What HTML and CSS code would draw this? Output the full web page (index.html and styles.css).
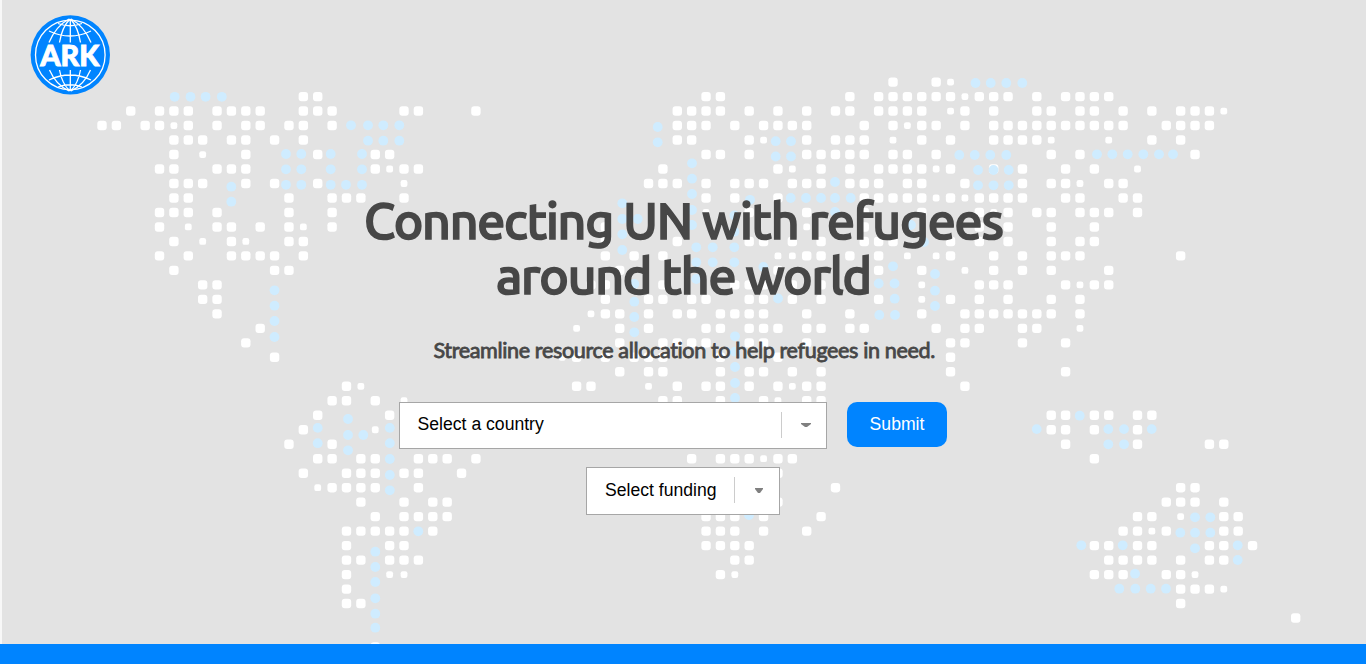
FILE: index.html
```html
<!DOCTYPE html>
<html lang="en">
<head>
<meta charset="utf-8">
<title>ARK</title>
<link rel="stylesheet" href="styles.css">
</head>
<body>
<main class="hero">
  <svg class="map" viewBox="0 0 1366 644" aria-hidden="true"><g id="land"></g><g id="marks"></g></svg>
  <header class="header">
    <svg class="logo" viewBox="0 0 80 81">
      <circle class="disc" cx="40.300" cy="40.900" r="39.700"/>
      <g class="lines">
        <circle cx="40.300" cy="40.900" r="34.800"/>
        <path d="M40.300 5v23.500M40 5Q32 13 29.500 28.500M40.500 5Q48 13 50.500 28.500M39 5Q26 12 19 28.500M41 5Q54 12 61 28.500M28 9.500Q40 14 52 9.500M19 17Q40 27 61 17"/>
        <path d="M40.300 77V56M40 77Q32 70 29.500 56M40.500 77Q48 70 50.500 56M39 77Q26 71 19.500 56M41 77Q54 71 60.500 56M28 73Q40 68.500 52 73M19 66Q40 56 61 66"/>
      </g>
      <text class="logo-text" x="10.300" y="52.300" textLength="59" lengthAdjust="spacingAndGlyphs">ARK</text>
    </svg>
  </header>
  <h1 class="title"><span class="line line-one">Connecting UN with refugees</span><span class="line line-two">around the world</span></h1>
  <p class="subtitle">Streamline resource allocation to help refugees in need.</p>
  <form class="form">
    <div class="row">
      <div class="select select-country"><span class="value">Select a country</span><span class="arrow"><svg width="10" height="5" viewBox="0 0 10 5"><path d="M0 0h10v1L6 4H4L0 1z"/></svg></span></div>
      <button class="submit" type="button">Submit</button>
    </div>
    <div class="select select-funding"><span class="value">Select funding</span><span class="arrow"><svg width="8" height="5" viewBox="0 0 8 5"><path d="M0 0h8v1L5 5H3L0 1z"/></svg></span></div>
  </form>
</main>
<footer class="footer"></footer>
<script src="map.js"></script>
</body>
</html>
```

FILE: styles.css
```css
* { box-sizing: border-box; }
body { margin: 0; background: #0084ff; overflow: hidden; font-family: "Liberation Sans", Arial, sans-serif; }
.hero { position: relative; height: 644px; background: #e3e3e3; border-left: 2px solid #f8f8f8; }
.map { position: absolute; left: -2px; top: 0; width: 1366px; height: 644px; }
#land { fill: #fff; }
#marks { fill: #cfecff; }
.header { position: relative; height: 193px; padding: 14px 0 0 28px; }
.logo { display: block; width: 80px; height: 81px; }
.disc { fill: #0084ff; }
.lines { fill: none; stroke: #fff; stroke-width: 1.3; }
.logo-text { fill: #fff; stroke: #fff; stroke-width: 0.9; font: 900 28px Lato, sans-serif; }
.title { position: relative; margin: 0; color: #474747; font: 500 50px/55px Ubuntu, "Noto Sans", sans-serif; -webkit-text-stroke: 1.6px #474747; }
.line { display: block; width: max-content; white-space: nowrap; }
.line-one { margin-left: 362px; letter-spacing: -1.25px; }
.line-two { margin-left: 494px; letter-spacing: -1.25px; }
.subtitle { position: relative; width: max-content; margin: 35px 0 0 431.5px; color: #474747; font: 400 21.6px/25px Lato, sans-serif; letter-spacing: -0.38px; -webkit-text-stroke: 0.8px #474747; white-space: nowrap; }
.form { position: relative; display: flex; flex-direction: column; align-items: center; gap: 18px; margin: 39px 0 0; font-size: 17.6px; }
.row { display: flex; align-items: flex-start; gap: 20px; margin-right: 22px; }
.select { display: flex; justify-content: space-between; align-items: flex-start; padding-left: 17.6px; border: 1px solid #a6a6a6; background: #fff; color: #000; }
.select-country { width: 428px; height: 47px; }
.select-funding { width: 194px; height: 48px; margin-right: 2px; padding-left: 18px; }
.value { line-height: 42px; white-space: nowrap; }
.select-funding .value { line-height: 44px; }
.arrow { display: flex; justify-content: center; align-items: center; width: 45px; height: 26px; margin-top: 9px; padding-left: 3px; border-left: 1px solid #ccc; fill: #808080; }
.submit { width: 100px; height: 45px; padding: 0 0 1px; border: 0; border-radius: 10px; background: #0084ff; color: #fff; font: 17.6px "Liberation Sans", Arial, sans-serif; }
.footer { height: 20px; background: #0084ff; }
```

FILE: map.js
```js
// Land tiles per grid row; "s" marks a smaller tile.
const rows = [
  "55 58 59s",
  "14 15 42 43 52 54 55 56 57 58 59 60s 61 62 63 65 67 68 69 70",
  "2 4 5 6 8 9 10 11 14 15 16 21 22 26 40 41 42 43 45 47 49 51 52 54 55 56 57 59s 60 62 65 66 68 69 71 73 75 76 77 78s",
  "0 1 3 4 5s 6 8 10 11 13 14 16 40 41 42 44 46 47 48 49 53 55 56s 57 58 60 62 63 64 65 66 67 68 69 70 71 74 75 76 77",
  "5 6 7 9 10 12 14 40 41 45 46s 49 51 52 53 55s 57 59 62 63 64 65 66s 70s 73 75",
  "5 7s 10 15 19 20 42 43 45 49 50 51 52 53 55 56 58 66 68 76",
  "4 5 8 9 10 19 20s 21 22 39 47 48s 50 52 54 55 56 57 58s 59 62 64 67 69 72s",
  "5 6 7 10 12 15 21s 38 39 40 42 44 45 46 48 49 50 52 53 54 56 57 60 64 66 67 68s 70 71",
  "5 6 13 16 17 18 21 42 44 47 53 54 55 56 57 58s 59 60s 61 62 63 64 67 68 71 72",
  "4 5 6 8 13 16 42s 45 49 53 57 61 62s 63 65 66 68 69 70 72",
  "4 6s 8 9 11 13 14s 16 35 49s 53 61 63 66 69",
  "5 7s 9 10s 13 14 35 40 45 46 48 50 53 54 55 59 61 63 66 68 69",
  "4 6 9 10 11 12 14 35 37 39 47s 48s 49 50 52 54 56s 58s 59 62 64 66 67 68 75",
  "5 12 13 36 47 54 57 60s 62 64 66 70",
  "7 8 34 35 39 44 45 46 48 50 57s 61 62 63 67 68s 69 70",
  "7 8 35 38 39 41 42 45 46 48 50 54 57s 59 61 63 66 68",
  "8 34s 35 36 38 40 41 43 44 45 46 49 52 57 60 61 62 63 64 65 66 68",
  "11 33s 36 38 42 43 45 46 47 49 50 52 53 58 60 61 64 65 68s",
  "10 36 39 40 41 42 45 46 49 59 60 64 67",
  "12 32s 33 35 37 38 39 43 47 59",
  "36 38 39 43 45 46 48 50 59 67",
  "17 18s 33 34 38s 40 42 43 45 47 48s 49 50 60",
  "16 17 19 21s 39 40 43 46 47s 49 50",
  "15 20 66 67 69 70 72 73",
  "14 19s 66 67 69 72",
  "13 16 67 72 77 78",
  "15 16 18 19 22 23 24 26 41 43 44 45 46s 47 48 69",
  "14 17 18 19 21 22 25 47",
  "15s 16 17 18 19 22 51 75 76",
  "18 21 23 24 47 74 75 76 78",
  "19 21 22 23 24 42 43 44 46 50 72 73 75s 78 79",
  "17 18 19 20 21 23 42 43 44 46 49 71 72 73s 74 78 79",
  "17 20 21 42 43 44 45 69 70 72 73 77 78 80",
  "17 18 20 21 22 44 45 70 71 72 73 75 77 78",
  "17 20s 21s 43 44s 69 70 71 74 75 76s",
  "17 75 76 77 78s",
  "17 18 75",
  "83"
];
// Highlighted places, each entry: y, then the x of every dot at that height.
const marks = [
  [96.8,174.7,190.5,205.6,221.8],[154,286,301.3,330.7,362],[169.3,286,301.3,330.7,362],
  [184.8,286,301.3,330.7,346,362],[186.7,231.3],[201.7,231.3],[290.3,274.5],[305.7,274.5],[321,274.5],[337,274.5],
  [125.3,351,368,383.3,399.3],[140.7,368,383.3,399.3],
  [419,348],[435,348,363.3],[450.3,348],[427.9,317.7,389.8],[443.2,317.7,389.8],[459,389.8],[475,389.8],[490.3,389.8],
  [531.3,418.3],[551.7,375.3],[567,375.3],[582,375.3],[598.3,375.3],[613.7,375.3],[627.7,375.3],
  [127,657.7],[142.3,657.7],[163.3,692],[178.7,692],[194,692],[210,692],[225,692],
  [203.3,622.3],[219,622.3,637.7],[234.3,622.3],[250,622.3],[247.3,696.3,712.7,734.3],[262.3,696.3,712.7,734.3],[279,696.3],
  [199.8,750],[215.5,734.4],[231.7,734.4],[284,634.3],[301.7,634.3],[317,634.3],[332.3,634.3],
  [336.3,735],[351.7,735],[367,735],[383,735],[398,735],[267,763.4],
  [141.2,775.7,791],[156.5,775.7,791],[182,835],[198,790.7,806,821,835,850.7],[212,835],[225,911],[242,924],[298.5,778],
  [266.3,893],[283.5,878.7,894.5],[298.7,894.7],[315,879.3,895],[274,935],[290.7,935],[306,935],
  [83,975.5,990.7,1006.3,1022.3],[155,959.3,974.7,990.3,1006.3],[170,978,993.5,1008.7],[185.3,978,993.5,1008.7],
  [154.3,1097,1112.3,1127.7,1143.3,1159,1173],[515,749],[415.7,1079.7],[429.1,1036.7,1108.3,1124,1151.7],[444.3,1108.3,1124],
  [517.3,1195,1210.3],[532.7,1180.3,1195,1210.3],[545.3,1081.3,1122.7,1237.7],[548.3,1195],[560,1237.7],[573.7,1135],
  [588.7,1119.3,1135.3,1150.7,1166]
];
const ns = "http://www.w3.org/2000/svg";
function add(parent, tag, attrs) {
  const el = document.createElementNS(ns, tag);
  for (const key in attrs) el.setAttribute(key, attrs[key]);
  document.getElementById(parent).appendChild(el);
}
function tile(x, y, size) {
  add("land", "rect", { x: x - size / 2, y: y - size / 2, width: size, height: size, rx: size * 0.32 });
}
rows.forEach((row, r) => row.split(" ").forEach(cell => {
  tile(102 + parseInt(cell, 10) * 14.382, 82.1 + r * 14.485, cell.endsWith("s") ? 6.8 : 9.4);
}));
tile(375.3, 647, 9.4);
marks.forEach(([y, ...xs]) => xs.forEach(x => add("marks", "circle", { cx: x, cy: y, r: 4.9 })));
```
